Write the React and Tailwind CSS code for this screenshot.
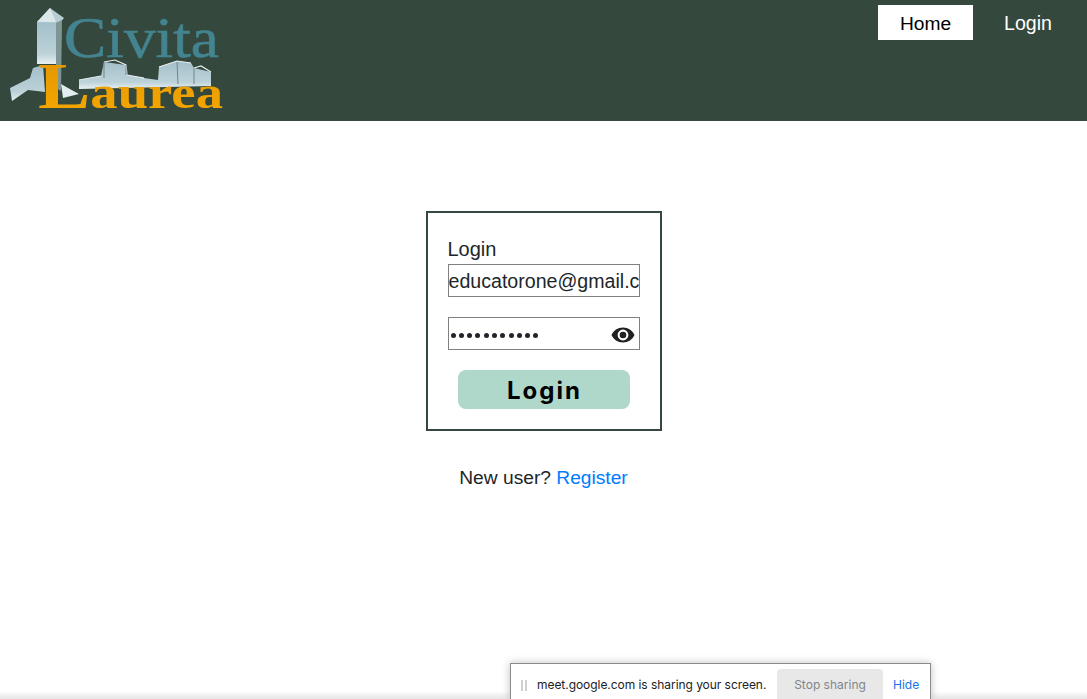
import { useState } from "react";

const BASE_FONT = "font-['Liberation_Sans',Arial,sans-serif]";

function Logo() {
  return (
    <svg width="226" height="121" viewBox="0 0 226 121" className="block shrink-0">
      <defs>
        <linearGradient id="bld" x1="0" y1="0" x2="0" y2="1">
          <stop offset="0" stopColor="#a3bfca" />
          <stop offset="0.75" stopColor="#bcd2d9" />
          <stop offset="1" stopColor="#e8eff1" />
        </linearGradient>
        <linearGradient id="gold" x1="0" y1="0" x2="0" y2="1">
          <stop offset="0" stopColor="#e09400" />
          <stop offset="1" stopColor="#f7a900" />
        </linearGradient>
      </defs>
      {/* skyline, left and right of the tower */}
      <path d="M9 88 L29 78 L32 68 L42 65 L44 92 L27 90 L11 101 Z" fill="url(#bld)" />
      <path
        d="M78 80 L100 76 L103 62 L125 65 L126 75 L143 78 L157 80 L158 67 L176 61 L190 63 L193 68 L210 72 L210 86 L78 89 Z"
        fill="url(#bld)"
      />
      <path
        d="M78 80 L100 76 M103 62 L114 60 L125 65 L126 75 L143 78 M158 67 L176 61 L190 63 M193 68 L200 66 L210 72"
        fill="none"
        stroke="#e6eef0"
        strokeWidth="1.2"
      />
      <path d="M103 62 L103 78 M125 65 L125 75 M176 62 L177 84 M193 68 L193 84" fill="none" stroke="#6f8782" strokeWidth="1" />
      {/* tower */}
      <path d="M36 22 L36 64 L55 64 L55 22 Z" fill="url(#bld)" />
      <path d="M36 22 L49 8 L63 18 L59 23 Z" fill="#b7ccd3" />
      <path d="M36 22 L49 8 L55 22 Z" fill="#dce7ea" />
      <path d="M55 23 L61 20 L60 91 L55 88 Z" fill="#7d9693" />
      <path d="M60 84 L67 88 L78 94 L62 98 Z" fill="#e3ecee" />
      <text
        x="63"
        y="57"
        fontFamily="'Liberation Serif', serif"
        fontSize="57"
        textLength="155"
        lengthAdjust="spacingAndGlyphs"
        fill="#438490"
        stroke="#438490"
        strokeWidth="0.6"
      >
        Civita
      </text>
      <text
        x="37"
        y="108"
        fontFamily="'Liberation Serif', serif"
        fontWeight="700"
        textLength="185"
        lengthAdjust="spacingAndGlyphs"
        fill="url(#gold)"
      >
        <tspan fontSize="66">L</tspan>
        <tspan fontSize="46">aurea</tspan>
      </text>
    </svg>
  );
}

function Header() {
  return (
    <header className="h-[121px] bg-[#34483d] flex justify-between items-start pl-[1px]">
      <Logo />
      <nav className="flex pt-[5px] pr-[4px] leading-[37px]">
        <a className="w-[95px] h-[35px] bg-white text-black text-center text-[19.2px]">Home</a>
        <a className="w-[110px] h-[35px] text-white text-center text-[19.6px]">Login</a>
      </nav>
    </header>
  );
}

function EyeIcon() {
  return (
    <svg width="24" height="16" viewBox="0 0 24 16" className="block">
      <path
        fillRule="evenodd"
        fill="#212121"
        d="M12 .5C6.8.5 2.4 3.6.5 8c1.9 4.4 6.300 7.500 11.500 7.500S21.600 12.400 23.500 8C21.600 3.600 17.200.5 12 .5Zm0 12.900A5.400 5.400 0 1 1 12 2.600a5.400 5.400 0 0 1 0 10.800Z"
      />
      <circle cx="12" cy="8" r="3.300" fill="#212121" />
    </svg>
  );
}

function LoginCard() {
  const [email, setEmail] = useState("educatorone@gmail.com");
  return (
    <div className="w-[236px] h-[220px] border-2 border-[#34483d] px-5 pt-[24px]">
      <label className="block text-[20px] leading-[24px] text-[#212529] mb-[3px]">Login</label>
      <input
        value={email}
        onChange={(e) => setEmail(e.target.value)}
        className="block w-[192px] h-[33px] border border-[#808080] pt-[2px] text-[19.6px] text-[#212529] outline-none"
      />
      <div className="mt-5 w-[192px] h-[33px] border border-[#808080] flex items-center justify-between pt-[3px] pr-[4px]">
        <div className="flex gap-[3.3px] pl-[2px]">
          {Array.from({ length: 11 }).map((_, i) => (
            <span key={i} className="w-[5px] h-[5px] rounded-full bg-[#212529]" />
          ))}
        </div>
        <EyeIcon />
      </div>
      <button className="block mt-5 ml-[10px] w-[172px] h-[39px] pt-[2px] pl-[2px] rounded-[8px] bg-[#afd8ca] text-black font-['Inter',sans-serif] font-bold text-[24px] tracking-[2px]">
        Login
      </button>
    </div>
  );
}

function ShareBar() {
  return (
    <div className="absolute left-[510px] top-[663px] w-[421px] h-[36px] bg-white border border-[#8a8a8a] border-b-0 shadow-[0_0_8px_rgba(0,0,0,0.25)] flex items-start text-[12px] font-['Inter','Liberation_Sans',sans-serif]">
      <span className="ml-[10px] mt-[16px] w-[2px] h-[11px] bg-[#d0d0d0]" />
      <span className="ml-[2px] mt-[16px] w-[2px] h-[11px] bg-[#d0d0d0]" />
      <span className="ml-[10px] mt-[13px] leading-[16px] tracking-[-0.05px] text-[#202124] whitespace-nowrap">
        meet.google.com is sharing your screen.
      </span>
      <span className="absolute left-[266px] top-[5px] w-[106px] h-[31px] bg-[#e8e8e8] rounded-t-[4px] text-center leading-[31px] text-[#80868b]">
        Stop sharing
      </span>
      <span className="absolute left-[382px] top-[13px] leading-[16px] text-[#1a73e8]">Hide</span>
    </div>
  );
}

export default function App() {
  return (
    <div className={`relative w-[1087px] h-[699px] overflow-hidden bg-white ${BASE_FONT}`}>
      <Header />
      <main className="flex flex-col items-center pt-[90px]">
        <LoginCard />
        <p className="mt-[34px] text-[19.2px] leading-[26px] text-[#212529]">
          New user? <a className="text-[#007bff]">Register</a>
        </p>
      </main>
      <div className="absolute left-0 right-0 bottom-0 h-[8px] bg-gradient-to-t from-black/10 to-transparent" />
      <ShareBar />
    </div>
  );
}
